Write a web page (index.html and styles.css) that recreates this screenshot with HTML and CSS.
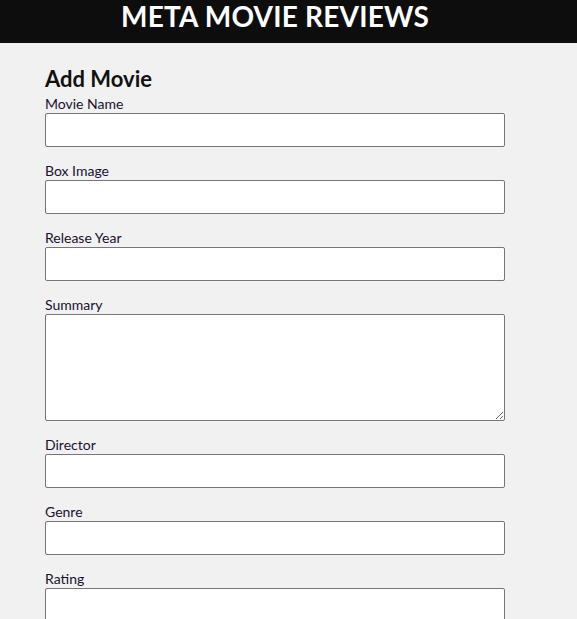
FILE: index.html
```html
<!DOCTYPE html>
<html>
<head>
<meta charset="utf-8">
<link rel="stylesheet" href="styles.css">
</head>
<body>
<header class="site-header">
  <h1 class="site-title">META MOVIE REVIEWS</h1>
</header>
<main class="content">
  <h2 class="form-title">Add Movie</h2>
  <form class="movie-form">
    <div class="field">
      <label class="label">Movie Name</label>
      <input class="input" type="text">
    </div>
    <div class="field">
      <label class="label">Box Image</label>
      <input class="input" type="text">
    </div>
    <div class="field">
      <label class="label">Release Year</label>
      <input class="input" type="text">
    </div>
    <div class="field">
      <label class="label">Summary</label>
      <textarea class="input textarea"></textarea>
    </div>
    <div class="field">
      <label class="label">Director</label>
      <input class="input" type="text">
    </div>
    <div class="field">
      <label class="label">Genre</label>
      <input class="input" type="text">
    </div>
    <div class="field">
      <label class="label">Rating</label>
      <input class="input" type="text">
    </div>
  </form>
</main>
</body>
</html>
```
FILE: styles.css
```css
html, body {
  margin: 0;
  padding: 0;
  background: #f1f1f1;
  font-family: Lato, "Open Sans", sans-serif;
  color: #1a1030;
}
.site-header {
  background: #0d0d0d;
  height: 43px;
  display: flex;
  justify-content: center;
  padding-right: 27px;
}
.site-title {
  margin: 0;
  color: #fff;
  font-size: 28px;
  line-height: 32px;
  font-weight: 700;
  letter-spacing: 0.2px;
}
.content {
  padding: 22px 0 0 45px;
}
.form-title {
  margin: 0;
  font-size: 22px;
  line-height: 27px;
  font-weight: 700;
  color: #111;
}
.movie-form {
  display: flex;
  flex-direction: column;
  gap: 12px;
  width: 460px;
}
.field {
  display: flex;
  flex-direction: column;
}
.label {
  font-size: 14px;
  line-height: 18px;
  height: 18px;
  padding-top: 3px;
}
.input {
  box-sizing: border-box;
  width: 460px;
  height: 34px;
  margin: 0;
  border: 1px solid #767676;
  border-radius: 2px;
  background: #fff;
}
.textarea {
  height: 107px;
  resize: vertical;
}
```
